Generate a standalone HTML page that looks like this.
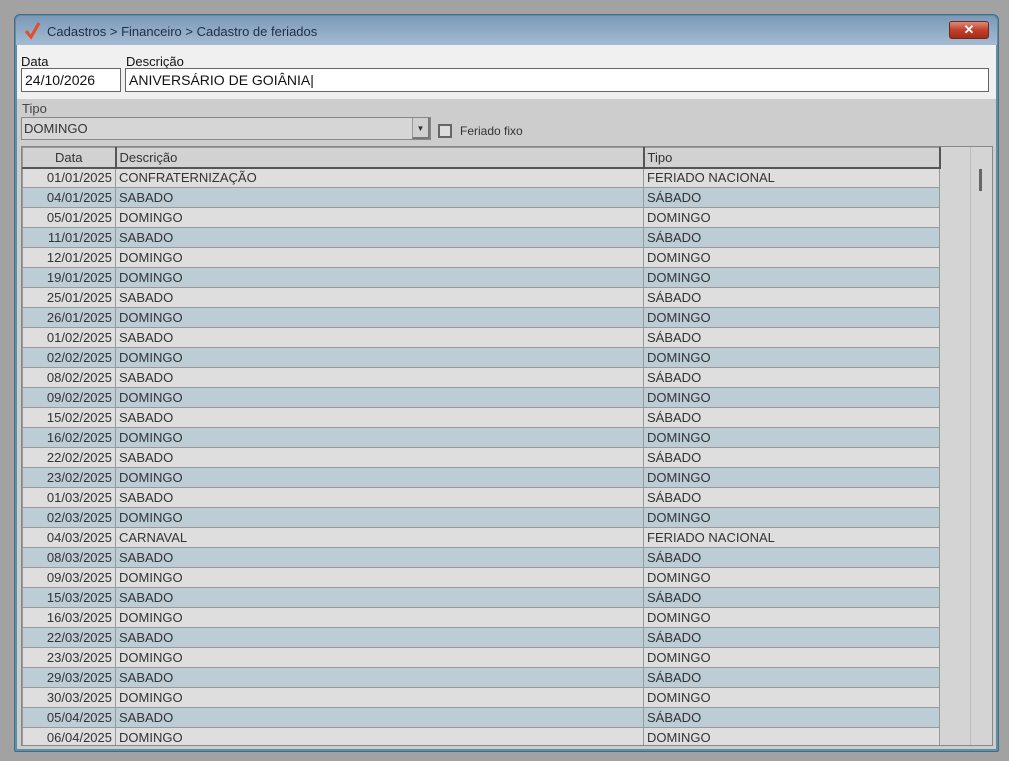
<!DOCTYPE html>
<html><head><meta charset="utf-8"><style>
*{margin:0;padding:0;box-sizing:border-box}
body{width:1009px;height:761px;background:#a2a2a2;position:relative;overflow:hidden;font-family:"Liberation Sans",sans-serif;font-size:13px;color:#222}
.win{position:absolute;left:14px;top:14px;width:985px;height:738px;background:#5d8fa8;border:1px solid #4a6a80;border-radius:6px 6px 2px 2px}
.title{position:absolute;left:1px;top:1px;right:1px;height:29px;background:linear-gradient(#7b99b8,#a4bcd2);border-radius:5px 5px 0 0}
.title span{position:absolute;left:31px;top:8px;font-size:13px;color:#1e2e44}
.close{position:absolute;right:8px;top:5px;width:40px;height:18px;border:1px solid #6a2a20;border-radius:3px;background:linear-gradient(#e08a78,#c0402a 50%,#a82a18);color:#fff;font-weight:bold;text-align:center;line-height:16px;font-size:13px}
.top{position:absolute;left:2px;top:30px;width:979px;height:54px;background:#f0f0f0}
.main{position:absolute;left:2px;top:84px;width:979px;height:650px;background:#cdcdcd}
.lbl{position:absolute;font-size:13px;color:#111}
.inp{position:absolute;background:#fff;border:1px solid #666;height:24px;font-size:14px;padding:3px 3px;color:#111}
.dd{position:absolute;left:21px;top:117px;width:410px;height:23px;border:1px solid #888;background:#d6d6d6;font-size:13px;padding:3px 2px;color:#333}
.dd b{position:absolute;right:0;top:0;width:18px;height:21px;border-left:1px solid #999;background:#cfcfcf;font-size:8px;text-align:center;line-height:21px;font-weight:normal;border-bottom:2px solid #777;border-right:2px solid #777}
.cb{position:absolute;left:438px;top:124px;width:14px;height:14px;border:2px solid #666;background:#ddd}
.grid{position:absolute;left:21px;top:146px;width:972px;height:600px;border:1px solid #888;background:#d4d4d4;overflow:hidden}
table{position:absolute;left:0;top:0;border-collapse:collapse;width:917px;table-layout:fixed}
td,th{height:20px;border:1px solid #999;font-size:13px;font-weight:normal;padding:0 3px;white-space:nowrap;overflow:hidden;color:#333}
th{background:#d2d2d2;text-align:left;height:20px;border-right:2px solid #555;border-bottom:2px solid #555}
tr.a td{background:#dedede}
tr.b td{background:#bdcdd5}
td.d{text-align:right}
.sb{position:absolute;left:948px;top:0;width:1px;height:600px;background:#bbb}
.thumb{position:absolute;left:957px;top:22px;width:3px;height:22px;background:#666}
</style></head><body>
<div class="win">
<div class="title"><svg style="position:absolute;left:8px;top:6px" width="18" height="18" viewBox="0 0 18 18"><path d="M2 9 L7 15 L15 1" stroke="#e0502a" stroke-width="3.2" fill="none"/></svg><span>Cadastros &gt; Financeiro &gt; Cadastro de feriados</span><div class="close">✕</div></div>
<div class="top"></div>
<div class="main"></div>
</div>
<div class="lbl" style="left:21px;top:54px">Data</div>
<div class="lbl" style="left:126px;top:54px">Descrição</div>
<div class="inp" style="left:21px;top:68px;width:100px">24/10/2026</div>
<div class="inp" style="left:125px;top:68px;width:864px">ANIVERSÁRIO DE GOIÂNIA|</div>
<div class="lbl" style="left:22px;top:101px;color:#444">Tipo</div>
<div class="dd">DOMINGO<b>▼</b></div>
<div class="cb"></div>
<div class="lbl" style="left:460px;top:124px;font-size:12px;color:#333">Feriado fixo</div>
<div class="grid">
<table>
<colgroup><col style="width:93px"><col style="width:528px"><col style="width:296px"></colgroup>
<tr><th style="text-align:center">Data</th><th>Descrição</th><th>Tipo</th></tr>
<tr class="a"><td class="d">01/01/2025</td><td>CONFRATERNIZAÇÃO</td><td>FERIADO NACIONAL</td></tr>
<tr class="b"><td class="d">04/01/2025</td><td>SABADO</td><td>SÁBADO</td></tr>
<tr class="a"><td class="d">05/01/2025</td><td>DOMINGO</td><td>DOMINGO</td></tr>
<tr class="b"><td class="d">11/01/2025</td><td>SABADO</td><td>SÁBADO</td></tr>
<tr class="a"><td class="d">12/01/2025</td><td>DOMINGO</td><td>DOMINGO</td></tr>
<tr class="b"><td class="d">19/01/2025</td><td>DOMINGO</td><td>DOMINGO</td></tr>
<tr class="a"><td class="d">25/01/2025</td><td>SABADO</td><td>SÁBADO</td></tr>
<tr class="b"><td class="d">26/01/2025</td><td>DOMINGO</td><td>DOMINGO</td></tr>
<tr class="a"><td class="d">01/02/2025</td><td>SABADO</td><td>SÁBADO</td></tr>
<tr class="b"><td class="d">02/02/2025</td><td>DOMINGO</td><td>DOMINGO</td></tr>
<tr class="a"><td class="d">08/02/2025</td><td>SABADO</td><td>SÁBADO</td></tr>
<tr class="b"><td class="d">09/02/2025</td><td>DOMINGO</td><td>DOMINGO</td></tr>
<tr class="a"><td class="d">15/02/2025</td><td>SABADO</td><td>SÁBADO</td></tr>
<tr class="b"><td class="d">16/02/2025</td><td>DOMINGO</td><td>DOMINGO</td></tr>
<tr class="a"><td class="d">22/02/2025</td><td>SABADO</td><td>SÁBADO</td></tr>
<tr class="b"><td class="d">23/02/2025</td><td>DOMINGO</td><td>DOMINGO</td></tr>
<tr class="a"><td class="d">01/03/2025</td><td>SABADO</td><td>SÁBADO</td></tr>
<tr class="b"><td class="d">02/03/2025</td><td>DOMINGO</td><td>DOMINGO</td></tr>
<tr class="a"><td class="d">04/03/2025</td><td>CARNAVAL</td><td>FERIADO NACIONAL</td></tr>
<tr class="b"><td class="d">08/03/2025</td><td>SABADO</td><td>SÁBADO</td></tr>
<tr class="a"><td class="d">09/03/2025</td><td>DOMINGO</td><td>DOMINGO</td></tr>
<tr class="b"><td class="d">15/03/2025</td><td>SABADO</td><td>SÁBADO</td></tr>
<tr class="a"><td class="d">16/03/2025</td><td>DOMINGO</td><td>DOMINGO</td></tr>
<tr class="b"><td class="d">22/03/2025</td><td>SABADO</td><td>SÁBADO</td></tr>
<tr class="a"><td class="d">23/03/2025</td><td>DOMINGO</td><td>DOMINGO</td></tr>
<tr class="b"><td class="d">29/03/2025</td><td>SABADO</td><td>SÁBADO</td></tr>
<tr class="a"><td class="d">30/03/2025</td><td>DOMINGO</td><td>DOMINGO</td></tr>
<tr class="b"><td class="d">05/04/2025</td><td>SABADO</td><td>SÁBADO</td></tr>
<tr class="a"><td class="d">06/04/2025</td><td>DOMINGO</td><td>DOMINGO</td></tr>
</table>
<div class="sb"></div><div class="thumb"></div>
</div>
</body></html>
